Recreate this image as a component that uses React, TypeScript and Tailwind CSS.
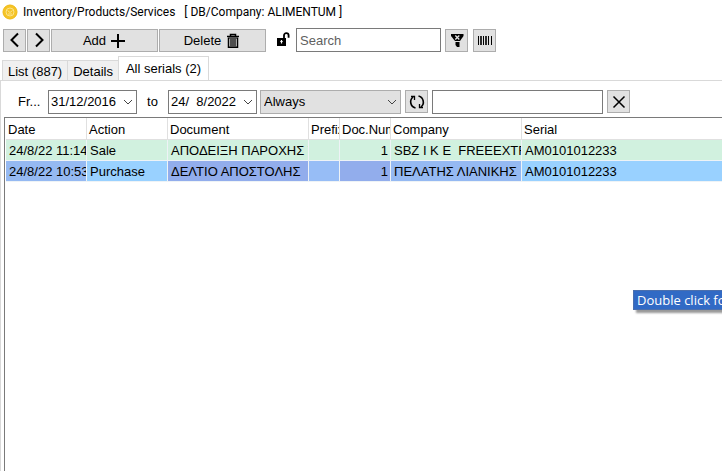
import React from "react";
import clsx from "clsx";

type Serial = {
    date: string;
    action: string;
    document: string;
    prefix: string;
    docNumber: number;
    company: string;
    serial: string;
};

const serials: Serial[] = [
    {
        date: "24/8/22 11:14",
        action: "Sale",
        document: "ΑΠΟΔΕΙΞΗ ΠΑΡΟΧΗΣ Υ",
        prefix: "",
        docNumber: 1,
        company: "SBZ I K E  FREEEXTR",
        serial: "AM0101012233",
    },
    {
        date: "24/8/22 10:53",
        action: "Purchase",
        document: "ΔΕΛΤΙΟ ΑΠΟΣΤΟΛΗΣ",
        prefix: "",
        docNumber: 1,
        company: "ΠΕΛΑΤΗΣ ΛΙΑΝΙΚΗΣ",
        serial: "AM0101012233",
    },
];

const columns = [
    { key: "date", label: "Date", width: "w-[81px]", selected: "bg-[#95b9f2]" },
    { key: "action", label: "Action", width: "w-[81px]", selected: "bg-[#99d1ff]" },
    { key: "document", label: "Document", width: "w-[141px]", selected: "bg-[#92adec]" },
    { key: "prefix", label: "Prefix", width: "w-[31px]", selected: "bg-[#97bdf6]" },
    { key: "docNumber", label: "Doc.Num", width: "w-[51px]", selected: "bg-[#92adec]" },
    { key: "company", label: "Company", width: "w-[131px]", selected: "bg-[#95b9f2]" },
    { key: "serial", label: "Serial", width: "w-auto", selected: "bg-[#99d1ff]" },
] as const;

function Icon({ children, className }: { children: React.ReactNode, className: string }) {
    return (
        <svg viewBox="0 0 16 16" fill="none" stroke="currentColor" className={clsx("shrink-0", className)} aria-hidden="true">
            {children}
        </svg>
    );
}

function ToolButton({ label, children }: { label: string, children: React.ReactNode }) {
    return (
        <button
            aria-label={label}
            className="flex h-[23px] w-[23px] shrink-0 items-center justify-center border border-[#adadad] bg-[#e1e1e1]"
        >
            {children}
        </button>
    );
}

function WideButton({ children }: { children: React.ReactNode }) {
    return (
        <button className="flex h-[23px] w-[107px] shrink-0 items-center justify-center gap-1 border border-[#adadad] bg-[#e1e1e1] pt-[2px]">
            {children}
        </button>
    );
}

function Chevron({ className }: { className?: string }) {
    return (
        <Icon className={clsx("size-4 text-[#444]", className)}>
            <path d="M4 6l4 4 4-4" />
        </Icon>
    );
}

function TitleBar() {
    return (
        <header className="flex h-6 items-center gap-[5px] px-[2px] font-[Roboto,sans-serif] text-xs whitespace-pre">
            <Icon className="size-4">
                <circle cx="8" cy="8" r="7" fill="#f5c426" stroke="#f0b912" />
                <circle cx="8" cy="8" r="4" stroke="#fbe38c" />
                <path d="M5.500 6.500L8 8.500l2.500-2M6 10h4" stroke="#fbe38c" />
            </Icon>
            <h1>Inventory/Products/Services   [ DB/Company: ALIMENTUM ]</h1>
        </header>
    );
}

function Toolbar() {
    return (
        <div className="flex h-8 items-center px-[3px]">
            <div className="flex gap-px">
                <ToolButton label="Previous">
                    <Icon className="size-4">
                        <path d="M11 1.500L4.500 8l6.500 6.500" strokeWidth="2" />
                    </Icon>
                </ToolButton>
                <ToolButton label="Next">
                    <Icon className="size-4">
                        <path d="M5 1.500L11.500 8 5 14.500" strokeWidth="2" />
                    </Icon>
                </ToolButton>
                <WideButton>
                    Add
                    <Icon className="size-4">
                        <path d="M8 1v14M1 8h14" strokeWidth="2" />
                    </Icon>
                </WideButton>
                <WideButton>
                    Delete
                    <Icon className="size-4">
                        <path d="M2 3.500h12M5.500 3V1.500h5V3" strokeWidth="1.500" />
                        <path d="M3.500 5v9.200h9V5" strokeWidth="1.500" />
                        <path d="M6 5.500v8M8 5.500v8M10 5.500v8" strokeWidth="1.300" />
                        <path d="M3 5h10" />
                    </Icon>
                </WideButton>
            </div>
            <Icon className="ml-[10px] size-4">
                <path d="M1 6h9v8H1z" fill="currentColor" stroke="none" />
                <path d="M8 6V3.500a2.300 2.300 0 0 1 4.600 0v2.300" strokeWidth="1.800" />
                <path d="M5.500 8v3.500M4.300 9.500h2.400" stroke="#fff" strokeWidth="1.200" />
            </Icon>
            <input
                type="text"
                aria-label="Search"
                placeholder="Search"
                className="ml-1 h-6 w-[145px] border border-[#7a7a7a] px-[3px] outline-none placeholder:text-[#606060]"
            />
            <div className="ml-1 flex gap-[5px]">
                <ToolButton label="Filter">
                    <Icon className="size-4">
                        <path d="M2 2h12.500v2L11 9H6L2 4z" fill="currentColor" stroke="none" />
                        <path d="M6.500 10h4v5h-2.500L6.500 13z" fill="currentColor" stroke="none" />
                        <path d="M6.300 3.500l4 4M10.300 3.500l-4 4" stroke="#e1e1e1" strokeWidth="1.300" />
                    </Icon>
                </ToolButton>
                <ToolButton label="Barcode">
                    <Icon className="size-4">
                        <path d="M1.500 4v9M6.500 4v9M11.500 4v9M14.500 4v9" />
                        <path d="M4 4v9M9 4v9" strokeWidth="1.600" />
                    </Icon>
                </ToolButton>
            </div>
        </div>
    );
}

function Tabs() {
    const [active, setActive] = React.useState("All serials (2)");
    return (
        <div role="tablist" className="flex h-6 items-end px-[2px]">
            {["List (887)", "Details", "All serials (2)"].map((tab) => (
                <button
                    key={tab}
                    role="tab"
                    aria-selected={tab === active}
                    onClick={() => { setActive(tab) }}
                    className={clsx(
                        "border border-b-0 border-[#d9d9d9]",
                        tab === active
                            ? "-mb-px h-[25px] bg-white px-[7px]"
                            : "-mr-px h-5 bg-[#f0f0f0] px-[5px] pt-[2px]"
                    )}
                >
                    {tab}
                </button>
            ))}
        </div>
    );
}

function DateField({ label, value }: { label: string, value: string }) {
    return (
        <div className="flex h-6 w-[89px] shrink-0 items-center border border-[#7a7a7a] bg-white">
            <input
                type="text"
                aria-label={label}
                defaultValue={value}
                className="w-[71px] min-w-0 pl-[2px] outline-none"
            />
            <button aria-label={"Pick " + label}>
                <Chevron />
            </button>
        </div>
    );
}

function Filters() {
    return (
        <div className="flex h-9 items-center pt-[5px]">
            <span className="w-[47px] shrink-0 pl-[17px]">Fr...</span>
            <DateField label="From date" value="31/12/2016" />
            <span className="w-[31px] shrink-0 text-center">to</span>
            <DateField label="To date" value="24/  8/2022" />
            <div className="relative ml-[3px] shrink-0">
                <select
                    aria-label="Period"
                    className="h-6 w-[141px] appearance-none border border-[#adadad] bg-[#e1e1e1] pl-[3px] outline-none"
                >
                    <option>Always</option>
                </select>
                <Chevron className="pointer-events-none absolute top-1 right-px" />
            </div>
            <div className="ml-1 flex items-center gap-1">
                <ToolButton label="Refresh">
                    <Icon className="size-4">
                        <path d="M6.500 14A6.300 6.300 0 0 1 4 3M9.500 2A6.300 6.300 0 0 1 12 13" strokeWidth="1.600" />
                        <path d="M2 2.500h3.500V6M14 13.500h-3.500V10" strokeWidth="1.300" />
                    </Icon>
                </ToolButton>
                <input
                    type="text"
                    aria-label="Filter text"
                    className="h-6 w-[171px] border border-[#7a7a7a] px-[3px] outline-none"
                />
                <ToolButton label="Clear">
                    <Icon className="size-4">
                        <path d="M2.500 2.500l11 11M13.500 2.500l-11 11" strokeWidth="1.500" />
                    </Icon>
                </ToolButton>
            </div>
        </div>
    );
}

function SerialsTable() {
    const [selected, setSelected] = React.useState(1);
    return (
        <table className="w-full table-fixed border-separate border-spacing-0">
            <thead>
                <tr>
                    {columns.map((col) => (
                        <th
                            key={col.key}
                            className={clsx(
                                "h-[22px] overflow-hidden border-r border-b border-[#e0e0e0] pt-[2px] pl-[2px] text-left font-normal whitespace-nowrap last:border-r-0",
                                col.width
                            )}
                        >
                            {col.label}
                        </th>
                    ))}
                </tr>
            </thead>
            <tbody>
                {serials.map((row, i) => (
                    <tr key={i} onClick={() => { setSelected(i) }}>
                        {columns.map((col) => (
                            <td
                                key={col.key}
                                className={clsx(
                                    "h-[21px] overflow-hidden border-r border-b border-[#eef3f6] pt-[2px] whitespace-pre last:border-r-0",
                                    col.key === "docNumber" ? "pr-[2px] text-right" : "pl-[3px]",
                                    i === selected ? col.selected : "bg-[#d1f1df]"
                                )}
                            >
                                {row[col.key]}
                            </td>
                        ))}
                    </tr>
                ))}
            </tbody>
        </table>
    );
}

export default function App() {
    return (
        <div className="relative flex min-h-screen flex-col overflow-hidden bg-white font-['Liberation_Sans',Arial,sans-serif] text-[13px] leading-4 text-black">
            <TitleBar />
            <Toolbar />
            <Tabs />
            <main className="flex flex-1 flex-col border-t border-l border-[#d9d9d9]">
                <Filters />
                <div className="ml-[3px] flex-1 border-t border-l border-[#7a7a7a] pl-px">
                    <SerialsTable />
                </div>
            </main>
            <div
                role="tooltip"
                className="absolute top-[290px] left-[633px] border border-[#4a6fae] bg-[#316ac5] px-[3px] py-px font-['Open_Sans','Noto_Sans',sans-serif] whitespace-nowrap text-white shadow-[3px_3px_2px_#999]"
            >
                Double click for
            </div>
        </div>
    );
}
